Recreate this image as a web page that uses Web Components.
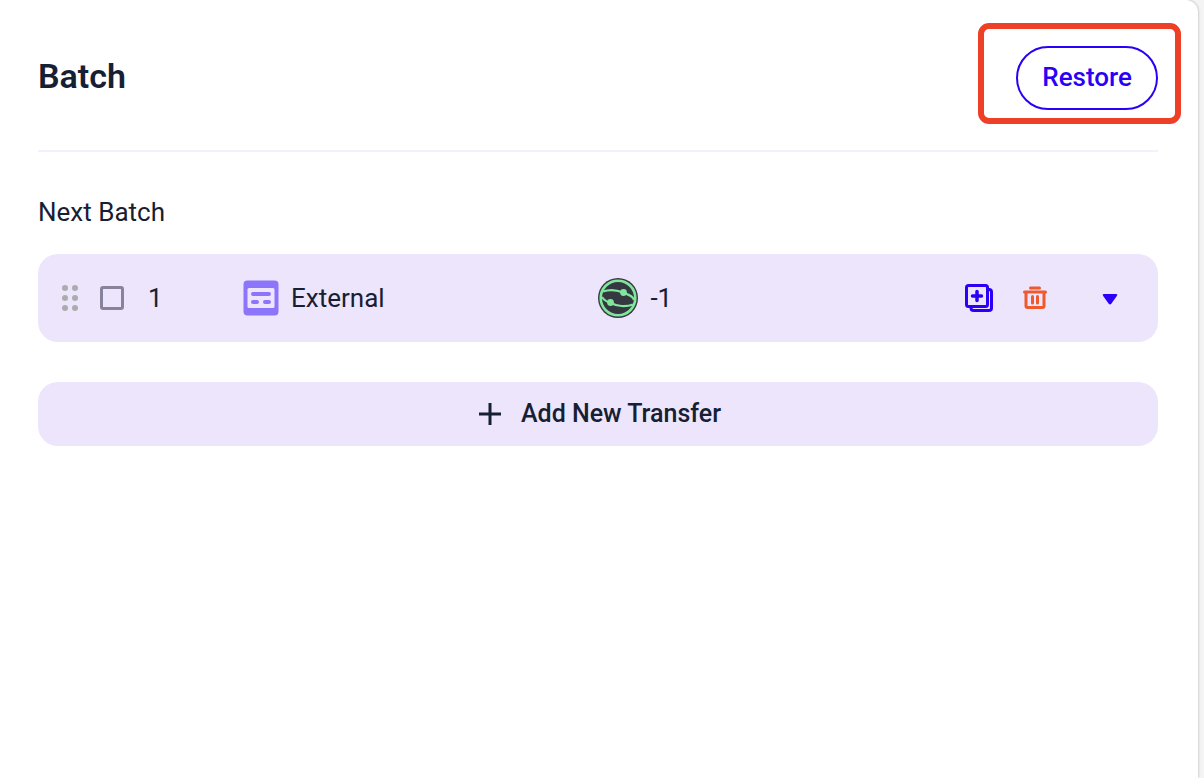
<!DOCTYPE html>
<html lang="en">
<head>
<meta charset="utf-8">
<meta name="viewport" content="width=device-width, initial-scale=1">
<title>Batch</title>
<style>
  html { background: #f4f4f5; }
  body {
    margin: 0;
    font-family: Roboto, "Liberation Sans", sans-serif;
    font-size: 26px;
    line-height: 32px;
    color: #172033;
    --lilac: #ede5fc;
    --blue: #2a00f7;
  }
</style>
</head>
<body>
<batch-panel>
  <batch-header slot="header">
    Batch
    <focus-frame slot="action"><pill-button>Restore</pill-button></focus-frame>
  </batch-header>
  <batch-list heading="Next Batch">
    <transfer-row index="1" amount="-1">External</transfer-row>
    <add-button slot="footer">Add New Transfer</add-button>
  </batch-list>
</batch-panel>

<script>
const define = (name, html, setup) => {
  const template = document.createElement('template');
  template.innerHTML = html;
  customElements.define(name, class extends HTMLElement {
    constructor() {
      super();
      this.attachShadow({ mode: 'open' }).append(template.content.cloneNode(true));
    }
    connectedCallback() { if (setup) setup(this, this.shadowRoot); }
  });
};

define('batch-panel', `
  <style>
    :host {
      display: block; box-sizing: border-box; min-height: 100vh;
      margin-right: 6px; padding: 46px 40px 40px 38px;
      background: #fff; border-top-right-radius: 12px;
      box-shadow: 0 0 3px rgba(0, 0, 0, .3);
    }
  </style>
  <slot name="header"></slot>
  <main><slot></slot></main>`);

define('batch-header', `
  <style>
    :host { display: block; }
    header {
      display: flex; align-items: center; justify-content: space-between;
      padding-bottom: 40px; border-bottom: 2px solid #f4f1ff;
    }
    h1 { margin: 0 0 4px; font-size: 34px; line-height: 40px; font-weight: 600; }
  </style>
  <header><h1><slot></slot></h1><slot name="action"></slot></header>`);

define('focus-frame', `
  <style>
    :host { display: block; position: relative; }
    .frame {
      position: absolute; inset: -23px -23px -14px -38px;
      border: 6px solid #ee4026; border-radius: 11px; pointer-events: none;
    }
  </style>
  <slot></slot><div class="frame"></div>`);

define('pill-button', `
  <style>
    :host { display: block; }
    button {
      display: block; height: 64px; padding: 0 24px 2px; font: inherit; font-weight: 500;
      color: var(--blue); background: #fff; border: 2px solid var(--blue);
      border-radius: 32px; cursor: pointer;
    }
  </style>
  <button type="button"><slot></slot></button>`);

define('batch-list', `
  <style>
    :host { display: block; padding-top: 44px; }
    h2 { margin: 0 0 26px; font: inherit; }
    .rows { display: grid; gap: 40px; }
  </style>
  <h2></h2>
  <div class="rows"><slot></slot><slot name="footer"></slot></div>`,
  (el, root) => { root.querySelector('h2').textContent = el.getAttribute('heading'); });

define('transfer-row', `
  <style>
    :host {
      display: grid; grid-template-columns: 38px 48px 95px 32fr 33fr 169px;
      align-items: center; height: 88px; box-sizing: border-box; padding: 0 24px;
      background: var(--lilac); border-radius: 20px;
    }
    svg { display: block; flex: none; }
    input {
      appearance: none; display: block; box-sizing: border-box; width: 24px; height: 24px;
      margin: 0; border: 3px solid #87839c; border-radius: 3px;
    }
    input:checked { background: var(--blue); }
    .kind, .token, .actions { display: flex; align-items: center; }
    .kind { gap: 12px; }
    .token { gap: 12px; }
    button {
      display: block; padding: 0; border: 0; background: none; color: var(--blue); cursor: pointer;
    }
    .remove { margin-left: 28px; color: #f0592e; }
    .expand { margin-left: 54px; }
  </style>
  <svg width="16" height="26" viewBox="0 0 16 26" fill="#acacac" aria-hidden="true">
    <circle cx="3" cy="3" r="3"/><circle cx="13" cy="3" r="3"/>
    <circle cx="3" cy="13" r="3"/><circle cx="13" cy="13" r="3"/>
    <circle cx="3" cy="23" r="3"/><circle cx="13" cy="23" r="3"/>
  </svg>
  <input type="checkbox" aria-labelledby="index">
  <span id="index"></span>
  <div class="kind">
    <svg width="36" height="36" viewBox="0 0 36 36" aria-hidden="true">
      <rect x=".5" y=".5" width="35" height="35" rx="4" fill="#8c75fb"/>
      <rect x="4.500" y="8" width="27" height="20" rx="1.500" fill="#ede5fc"/>
      <path d="M10 14h16M10 22h4M22 22h4" stroke="#8c75fb" stroke-width="4" stroke-linecap="round"/>
    </svg>
    <slot></slot>
  </div>
  <div class="token">
    <svg width="40" height="40" viewBox="0 0 40 40" fill="none" stroke="#7fe69b" aria-hidden="true">
      <circle cx="20" cy="20" r="20" fill="#353840" stroke="none"/>
      <circle cx="20" cy="20" r="17.300" stroke-width="2.600"/>
      <path d="M5 13.500C12 11 19 12 25 14.500C31 17 35 18 36 22" stroke-width="2.200"/>
      <path d="M4 19C6 22 9 24 13 25C19 28.500 28 29 35 26.500" stroke-width="2.200"/>
      <g fill="#7fe69b" stroke="none"><circle cx="25.500" cy="14.500" r="3.400"/><circle cx="12.500" cy="24.500" r="3.400"/></g>
    </svg>
    <span id="amount"></span>
  </div>
  <div class="actions">
    <button type="button" aria-label="Duplicate">
      <svg width="30" height="28" viewBox="0 0 30 28" fill="none" stroke="currentColor" stroke-width="3" stroke-linecap="round" stroke-linejoin="round">
        <rect x="1.500" y="1.500" width="21" height="21" rx="2"/>
        <path stroke-width="3.500" d="M12 7.500v9M7.500 12h9"/>
        <path d="M24 5.500q2.500 0 2.500 2.500v16q0 2.500-2.500 2.500H8.500q-2.500 0-2.500-2.500"/>
      </svg>
    </button>
    <button class="remove" type="button" aria-label="Delete">
      <svg width="24" height="24" viewBox="0 0 24 24" fill="none" stroke="currentColor" stroke-width="3">
        <path d="M7.500 2h9M1.500 6h21" stroke-linecap="round"/>
        <path d="M3 6v14q0 1.500 1.500 1.500h15q1.500 0 1.500-1.500V6"/>
        <path d="M9.500 10.500v6.500M14.500 10.500v6.500" stroke-linecap="round"/>
      </svg>
    </button>
    <button class="expand" type="button" aria-label="Expand">
      <svg width="18" height="24" viewBox="0 0 18 24" fill="currentColor">
        <path d="M3 8h12q2.200 0 .8 1.900l-5.500 7.800q-1.300 1.600-2.600 0L2.200 9.900Q.8 8 3 8z"/>
      </svg>
    </button>
  </div>`,
  (el, root) => {
    root.getElementById('index').textContent = el.getAttribute('index');
    root.getElementById('amount').textContent = el.getAttribute('amount');
  });

define('add-button', `
  <style>
    :host { display: block; }
    button {
      display: flex; align-items: center; justify-content: center; gap: 20px;
      width: 100%; height: 64px; padding: 0 0 0 4px; border: 0; border-radius: 20px;
      background: var(--lilac); color: inherit; font: inherit; font-size: 25px; font-weight: 500; cursor: pointer;
    }
  </style>
  <button type="button">
    <svg width="22" height="22" viewBox="0 0 22 22" stroke="currentColor" stroke-width="3" aria-hidden="true"><path d="M11 0v22M0 11h22"/></svg>
    <slot></slot>
  </button>`);
</script>
</body>
</html>
